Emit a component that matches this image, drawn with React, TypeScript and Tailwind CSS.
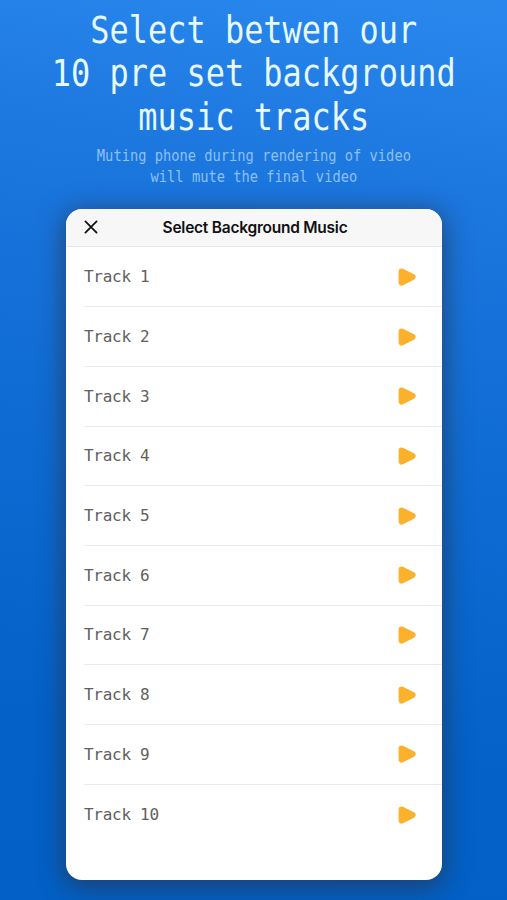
const tracks = [
  "Track 1",
  "Track 2",
  "Track 3",
  "Track 4",
  "Track 5",
  "Track 6",
  "Track 7",
  "Track 8",
  "Track 9",
  "Track 10",
];

function PlayIcon() {
  return (
    <svg width="18" height="18" viewBox="0 0 18 18" fill="#fbb12c" stroke="#fbb12c" strokeWidth="6" strokeLinejoin="round">
      <path d="M3.6 3.4 L14.6 9 L3.6 14.6 Z" />
    </svg>
  );
}

function CloseIcon() {
  return (
    <svg width="14" height="14" viewBox="0 0 14 14" fill="none" stroke="#111111" strokeWidth="1.8" strokeLinecap="round">
      <path d="M1.4 1.4 L12.6 12.6 M12.6 1.4 L1.4 12.6" />
    </svg>
  );
}

export default function App() {
  return (
    <main className="flex flex-col items-center w-[507px] h-[900px] overflow-hidden bg-[linear-gradient(188deg,#2a88ed_0%,#1b76de_22%,#0f6cd4_48%,#0361c8_80%,#0260c6_100%)]">
      <h1 className="mt-[9px] whitespace-nowrap text-center font-['DejaVu_Sans_Mono',monospace] text-[36.5px] leading-[43.3px] text-[#e6f9ff] scale-x-[0.875]">
        Select betwen our
        <br />
        10 pre set background
        <br />
        music tracks
      </h1>
      <p className="mt-[6px] pl-[2px] whitespace-nowrap text-center font-['DejaVu_Sans_Mono',monospace] text-base leading-[21.5px] text-[#8ec0f6] scale-x-[0.858]">
        Muting phone during rendering of video
        <br />
        will mute the final video
      </p>

      <section className="mt-[21px] w-[376px] h-[671px] shrink-0 rounded-2xl overflow-hidden bg-white shadow-[0_5px_26px_2px_rgba(40,50,70,0.7)]">
        <header className="grid grid-cols-[50px_1fr_47px] items-center h-[38.6px] bg-[#f7f7f7] border-b border-[#e6e6e6]">
          <button className="pl-[18px] pb-px">
            <CloseIcon />
          </button>
          <h2 className="text-center font-['Inter',sans-serif] font-semibold text-[15.5px] tracking-[-0.24px] text-[#111111]">
            Select Background Music
          </h2>
        </header>
        <ul className="pl-[18px]">
          {tracks.map((track) => (
            <li key={track} className="flex items-center justify-between h-[59.7px] pr-[26px] border-b border-[#ebebeb] last:border-b-0">
              <span className="pl-[0.5px] pt-px font-['DejaVu_Sans_Mono',monospace] text-base tracking-[-0.28px] text-[#606060]">{track}</span>
              <PlayIcon />
            </li>
          ))}
        </ul>
      </section>
    </main>
  );
}
